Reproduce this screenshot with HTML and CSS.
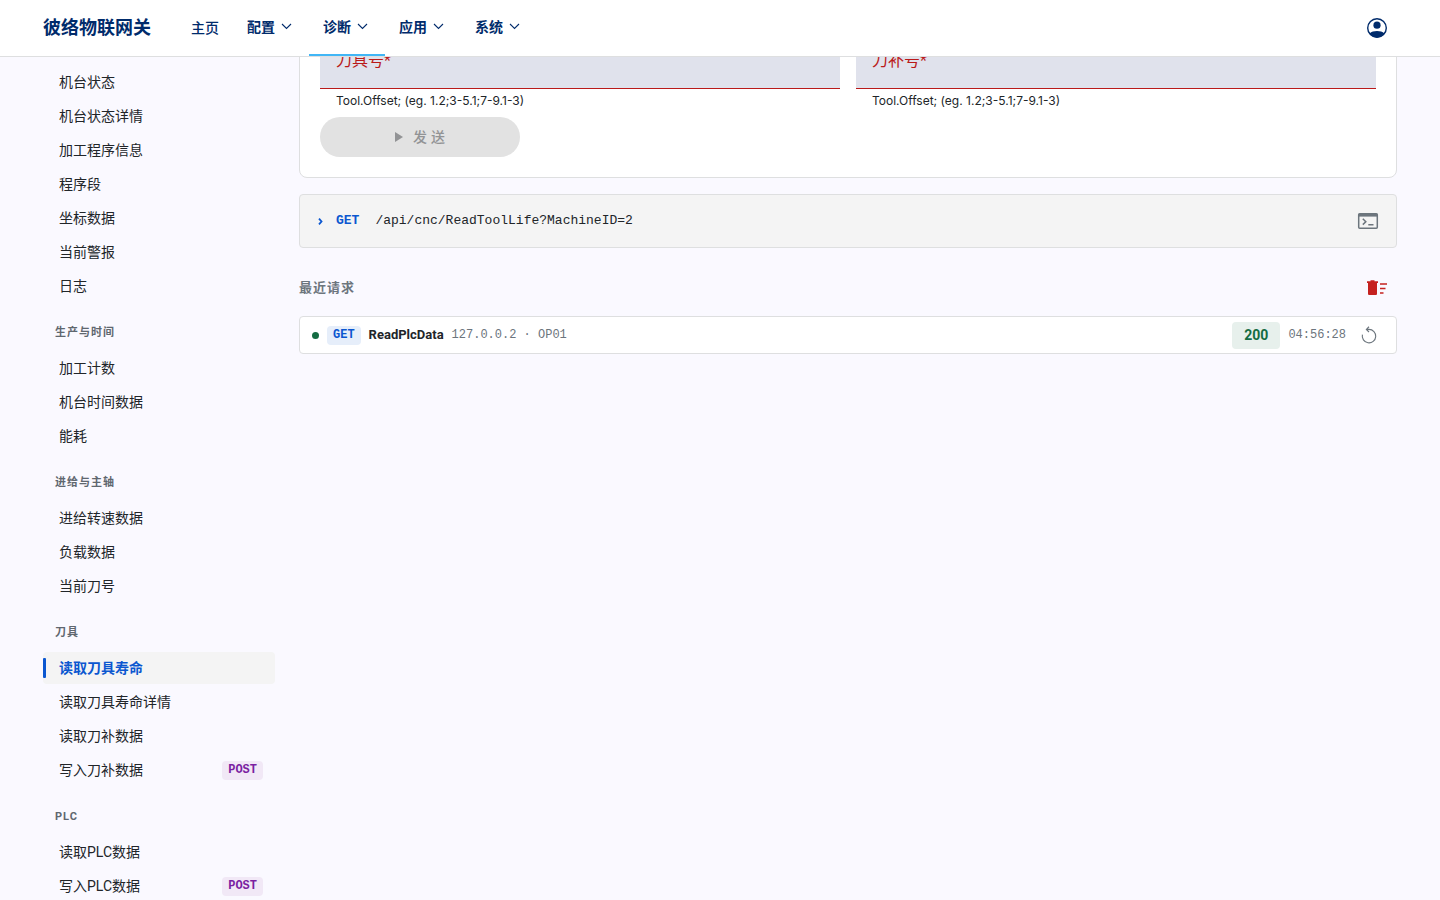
FILE: index.html
```html
<!DOCTYPE html>
<html lang="zh-CN">
<head>
    <meta charset="utf-8" />
    <meta name="viewport" content="width=device-width, initial-scale=1" />
    <title>彼络物联网关</title>
    <link rel="stylesheet" href="styles.css">
</head>
<body>
    <header class="topbar">
        <a class="brand" href="#">彼络物联网关</a>
        <nav class="nav">
            <a class="nav-item" href="#">主页</a>
            <button class="nav-item menu" type="button">配置 <svg class="caret" viewBox="0 0 16 16"><path d="M3 5l4.500 4.500L12 5" /></svg></button>
            <button class="nav-item menu active" type="button">诊断 <svg class="caret" viewBox="0 0 16 16"><path d="M3 5l4.500 4.500L12 5" /></svg></button>
            <button class="nav-item menu" type="button">应用 <svg class="caret" viewBox="0 0 16 16"><path d="M3 5l4.500 4.500L12 5" /></svg></button>
            <button class="nav-item menu" type="button">系统 <svg class="caret" viewBox="0 0 16 16"><path d="M3 5l4.500 4.500L12 5" /></svg></button>
        </nav>
        <button class="icon-btn account" type="button" aria-label="账户">
            <svg viewBox="0 0 24 24" width="24" height="24">
                <circle cx="12" cy="12" r="9.300" fill="none" stroke="currentColor" stroke-width="1.400" />
                <circle cx="12" cy="9.200" r="3.600" fill="currentColor" />
                <path d="M4.600 17.500C6.500 15.900 9 15.100 12 15.100s5.500.8 7.400 2.400C17.700 20 15 21.600 12 21.600S6.300 20 4.600 17.500z" fill="currentColor" />
            </svg>
        </button>
    </header>

    <div class="page">
        <aside class="sidebar">
            <a class="side-link" href="#">机台状态</a>
            <a class="side-link" href="#">机台状态详情</a>
            <a class="side-link" href="#">加工程序信息</a>
            <a class="side-link" href="#">程序段</a>
            <a class="side-link" href="#">坐标数据</a>
            <a class="side-link" href="#">当前警报</a>
            <a class="side-link" href="#">日志</a>

            <h3 class="side-title">生产与时间</h3>
            <a class="side-link" href="#">加工计数</a>
            <a class="side-link" href="#">机台时间数据</a>
            <a class="side-link" href="#">能耗</a>

            <h3 class="side-title">进给与主轴</h3>
            <a class="side-link" href="#">进给转速数据</a>
            <a class="side-link" href="#">负载数据</a>
            <a class="side-link" href="#">当前刀号</a>

            <h3 class="side-title">刀具</h3>
            <a class="side-link active" href="#">读取刀具寿命</a>
            <a class="side-link" href="#">读取刀具寿命详情</a>
            <a class="side-link" href="#">读取刀补数据</a>
            <a class="side-link" href="#">写入刀补数据 <span class="badge post">POST</span></a>

            <h3 class="side-title">PLC</h3>
            <a class="side-link" href="#">读取PLC数据</a>
            <a class="side-link" href="#">写入PLC数据 <span class="badge post">POST</span></a>
        </aside>

        <main class="content">
            <form class="card">
                <div class="fields">
                    <div class="field">
                        <label for="tool">刀具号*</label>
                        <input id="tool" type="text" required>
                        <div class="hint">Tool.Offset; (eg. 1.2;3-5.1;7-9.1-3)</div>
                    </div>
                    <div class="field">
                        <label for="offset">刀补号*</label>
                        <input id="offset" type="text" required>
                        <div class="hint">Tool.Offset; (eg. 1.2;3-5.1;7-9.1-3)</div>
                    </div>
                </div>
                <button class="send" type="submit" disabled>
                    <svg viewBox="0 0 18 18" width="18" height="18"><path d="M4 4v10l8-5z" fill="currentColor" /></svg>
                    <span>发送</span>
                </button>
            </form>

            <div class="request">
                <svg class="expand" viewBox="0 0 8 12" width="8" height="12"><path d="M3 3.700l2.500 2.800L3 9.300" /></svg>
                <span class="verb">GET</span>
                <code class="url">/api/cnc/ReadToolLife?MachineID=2</code>
                <button class="plain-btn" type="button" aria-label="终端">
                    <svg viewBox="0 0 24 24" width="24" height="24" fill="none" stroke="currentColor" stroke-width="1.500">
                        <rect x="2.700" y="4.700" width="18.600" height="14.600" rx="1" />
                        <path d="M2.500 6.200h19" stroke-width="2.800" />
                        <path d="M6.800 9.800l3 2.900-3 2.900M12.300 15.800h5.200" />
                    </svg>
                </button>
            </div>

            <div class="recent-head">
                <h2>最近请求</h2>
                <button class="icon-btn danger" type="button" aria-label="清空">
                    <svg viewBox="0 0 24 24" width="24" height="24" fill="currentColor">
                        <path d="M2 5.200h3.500V4.200h4v1H13V7h-1v10.500c0 1-.5 1.500-1.500 1.500h-6C3.500 19 3 18.500 3 17.500V7H2z" />
                        <path d="M15 7.300h7v1.500h-7zM15 11.800h5.500v1.500H15zM15 16.200h3.500v1.500H15z" />
                    </svg>
                </button>
            </div>

            <div class="history-row">
                <span class="dot"></span>
                <span class="badge get">GET</span>
                <strong class="name">ReadPlcData</strong>
                <span class="meta">127.0.0.2 · OP01</span>
                <span class="status">200</span>
                <time class="meta">04:56:28</time>
                <button class="plain-btn replay" type="button" aria-label="重放">
                    <svg viewBox="0 0 24 24" width="18" height="18" fill="none" stroke="currentColor" stroke-width="1.500">
                        <path d="M3.200 11.500A9 9 0 1 0 12 4.500H9M12 1L8.500 4.500 12 8" />
                    </svg>
                </button>
            </div>
        </main>
    </div>
</body>
</html>
```

FILE: styles.css
```css
* {
    box-sizing: border-box;
}
body {
    margin: 0;
    background-color: #faf9ff;
    color: #212529;
    font-family: Roboto, "Noto Sans CJK SC", sans-serif;
    font-size: 14px;
    line-height: 20px;
}
a {
    color: inherit;
    text-decoration: none;
}
button {
    border: 0;
    padding: 0;
    background: none;
    color: inherit;
    font-family: inherit;
    line-height: 20px;
    cursor: pointer;
}
svg {
    display: block;
}

/* top bar */
.topbar {
    position: fixed;
    top: 0;
    left: 0;
    right: 0;
    z-index: 10;
    display: flex;
    align-items: center;
    height: 57px;
    padding: 0 43px;
    background-color: #fff;
    border-bottom: 1px solid #dedfe0;
    color: #002b6b;
}
.brand {
    margin-right: 26px;
    font-size: 18px;
    font-weight: 700;
}
.nav {
    display: flex;
    align-self: stretch;
}
.nav-item {
    display: flex;
    align-items: center;
    gap: 4px;
    padding: 0 14px;
    border-top: 2px solid transparent;
    border-bottom: 2px solid transparent;
    font-size: 14px;
    font-weight: 500;
}
.nav-item.menu {
    padding-bottom: 2px;
    font-weight: 600;
}
.nav-item.active {
    border-bottom-color: #41b6f6;
}
.caret {
    width: 16px;
    height: 16px;
    fill: none;
    stroke: currentColor;
    stroke-width: 1.1;
}
.icon-btn {
    display: flex;
    align-items: center;
    justify-content: center;
    width: 40px;
    height: 40px;
    margin-left: auto;
}

.page {
    display: grid;
    grid-template-columns: 232px 1fr;
    gap: 24px;
    height: 100vh;
    padding: 0 43px;
    overflow: hidden;
}

/* sidebar */
.sidebar {
    display: flex;
    flex-direction: column;
    gap: 2px;
    height: 100vh;
    padding-top: 66px;
    overflow-y: auto;
    scrollbar-width: none;
}
.side-link {
    display: flex;
    flex-shrink: 0;
    align-items: center;
    justify-content: space-between;
    height: 32px;
    padding: 0 12px 0 16px;
    border-radius: 4px;
}
.side-link.active {
    padding-left: 0;
    justify-content: flex-start;
    gap: 13px;
    background-color: #f4f4f4;
    color: #0b57d0;
    font-weight: 700;
}
.side-link.active::before {
    content: "";
    width: 3px;
    height: 20px;
    border-radius: 1px;
    background-color: #0b57d0;
}
.side-title {
    flex-shrink: 0;
    margin: 21px 12px 9px;
    color: #5f676f;
    font-size: 11px;
    font-weight: 700;
    line-height: 16px;
    letter-spacing: 1px;
}
.badge {
    padding: 0 6px;
    border-radius: 4px;
    font-family: "Liberation Mono", monospace;
    font-size: 12px;
    font-weight: 700;
    line-height: 19px;
}
.badge.post {
    background-color: #f1e8f6;
    color: #7b1fa2;
}
.badge.get {
    background-color: #e6eefa;
    color: #0b57d0;
}

/* main column */
.content {
    min-width: 0;
    padding-top: 12px;
}
.card {
    padding: 20px;
    background-color: #fff;
    border: 1px solid #dedfe0;
    border-radius: 8px;
}
.fields {
    display: grid;
    grid-template-columns: 1fr 1fr;
    gap: 16px;
    margin-bottom: 4px;
}
.field {
    position: relative;
}
.field label {
    position: absolute;
    top: 16px;
    left: 16px;
    color: #ba1a1a;
    font-size: 16px;
    line-height: 24px;
}
.field input {
    display: block;
    width: 100%;
    height: 56px;
    padding: 20px 16px 4px;
    border: 0;
    border-bottom: 1px solid #ba1a1a;
    background-color: #e0e2ec;
    font-size: 16px;
}
.hint {
    padding: 0 16px;
    font-family: Inter, sans-serif;
    font-size: 12px;
    line-height: 24px;
}
.send {
    display: flex;
    align-items: center;
    justify-content: center;
    gap: 4px;
    width: 200px;
    height: 40px;
    border-radius: 20px;
    background-color: #e2e2e2;
    color: #929395;
    font-size: 14px;
    font-weight: 500;
    letter-spacing: 4px;
}
.request {
    display: flex;
    align-items: center;
    height: 54px;
    margin-top: 16px;
    padding: 0 16px;
    background-color: #f4f4f4;
    border: 1px solid #dedfe0;
    border-radius: 4px;
    font-family: "Liberation Mono", monospace;
    font-size: 13px;
}
.expand {
    margin-right: 12px;
    fill: none;
    stroke: #0b57d0;
    stroke-width: 1.8;
}
.verb {
    margin-right: 16px;
    color: #0b57d0;
    font-weight: 700;
}
.url {
    font-family: inherit;
}
.plain-btn {
    margin-left: auto;
    color: #6c757d;
}
.recent-head {
    display: flex;
    align-items: center;
    margin: 20px 0 8px;
}
.recent-head h2 {
    margin: 0;
    color: #6c757d;
    font-size: 13px;
    font-weight: 700;
    line-height: 20px;
    letter-spacing: 1px;
}
.danger {
    color: #c5221f;
}
.history-row {
    display: flex;
    align-items: center;
    gap: 8px;
    height: 38px;
    padding: 0 18px 0 12px;
    background-color: #fff;
    border: 1px solid #dedfe0;
    border-radius: 4px;
}
.dot {
    width: 7px;
    height: 7px;
    border-radius: 50%;
    background-color: #146c43;
}
.name {
    font-size: 13px;
}
.meta {
    color: #6c757d;
    font-family: "Liberation Mono", monospace;
    font-size: 12px;
}
.status {
    margin-left: auto;
    padding: 0 12px;
    border-radius: 4px;
    background-color: #e7f0ec;
    color: #146c43;
    font-size: 14px;
    font-weight: 700;
    line-height: 27px;
}
.replay {
    margin-left: 6px;
}
```
